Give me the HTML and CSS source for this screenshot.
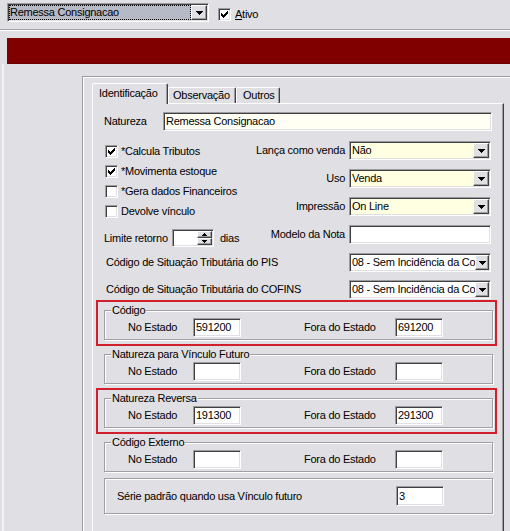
FILE: index.html
```html
<!DOCTYPE html>
<html lang="pt-BR">
<head>
<meta charset="utf-8">
<title>Natureza de Operação</title>
<link rel="stylesheet" href="styles.css">
</head>
<body>
<header class="topbar">
  <div class="combo">
    <div class="combo-field"><span class="combo-sel">Remessa Consignacao</span></div>
    <span class="dd-btn"><svg class="px" width="7" height="4" viewBox="0 0 7 4"><path d="M0 0H7V1H6V2H5V3H4V4H3V3H2V2H1V1H0Z"/></svg></span>
  </div>
  <div class="ativo">
    <span class="chk"><svg class="px" width="7" height="7" viewBox="0 0 7 7"><path d="M6 0H7V3H6V4H5V5H4V6H3V7H2V6H1V5H0V2H1V3H2V4H3V3H4V2H5V1H6Z"/></svg></span>
    <span><u>A</u>tivo</span>
  </div>
</header>
<main class="workspace">
  <div class="redbar"></div>
  <div class="lower">
    <div class="side"></div>
    <section class="panel">
      <div class="tabs">
        <div class="tab active t1">Identificação</div>
        <div class="tab t2">Observação</div>
        <div class="tab t3">Outros</div>
      </div>
      <div class="page">
        <div class="row">
          <span class="nat-lbl">Natureza</span>
          <span class="tb tb-nat">Remessa Consignacao</span>
        </div>

        <div class="section-b">
          <div class="leftcol">
            <div class="chkrow"><span class="chk"><svg class="px" width="7" height="7" viewBox="0 0 7 7"><path d="M6 0H7V3H6V4H5V5H4V6H3V7H2V6H1V5H0V2H1V3H2V4H3V3H4V2H5V1H6Z"/></svg></span><span>*Calcula Tributos</span></div>
            <div class="chkrow"><span class="chk"><svg class="px" width="7" height="7" viewBox="0 0 7 7"><path d="M6 0H7V3H6V4H5V5H4V6H3V7H2V6H1V5H0V2H1V3H2V4H3V3H4V2H5V1H6Z"/></svg></span><span>*Movimenta estoque</span></div>
            <div class="chkrow"><span class="chk"></span><span>*Gera dados Financeiros</span></div>
            <div class="chkrow"><span class="chk"></span><span>Devolve vínculo</span></div>
            <div class="limite">
              <span class="lim-lbl">Limite retorno</span>
              <span class="spin">
                <span class="spin-field"></span>
                <span class="spin-btns">
                  <span class="spin-btn"><svg class="px" width="5" height="3" viewBox="0 0 5 3"><path d="M2 0H3V1H4V2H5V3H0V2H1V1H2Z"/></svg></span>
                  <span class="spin-btn"><svg class="px" width="5" height="3" viewBox="0 0 5 3"><path d="M0 0H5V1H4V2H3V3H2V2H1V1H0Z"/></svg></span>
                </span>
              </span>
              <span class="dias">dias</span>
            </div>
          </div>
          <div class="rightcol">
            <div class="rrow">
              <span>Lança como venda</span>
              <div class="select yellow"><span class="sel-text">Não</span><span class="dd-btn"><svg class="px" width="7" height="4" viewBox="0 0 7 4"><path d="M0 0H7V1H6V2H5V3H4V4H3V3H2V2H1V1H0Z"/></svg></span></div>
            </div>
            <div class="rrow">
              <span>Uso</span>
              <div class="select yellow"><span class="sel-text">Venda</span><span class="dd-btn"><svg class="px" width="7" height="4" viewBox="0 0 7 4"><path d="M0 0H7V1H6V2H5V3H4V4H3V3H2V2H1V1H0Z"/></svg></span></div>
            </div>
            <div class="rrow">
              <span>Impressão</span>
              <div class="select yellow"><span class="sel-text">On Line</span><span class="dd-btn"><svg class="px" width="7" height="4" viewBox="0 0 7 4"><path d="M0 0H7V1H6V2H5V3H4V4H3V3H2V2H1V1H0Z"/></svg></span></div>
            </div>
            <div class="rrow">
              <span>Modelo da Nota</span>
              <span class="tb tb-wide"></span>
            </div>
          </div>
        </div>

        <div class="row cst-row">
          <span class="cst-lbl">Código de Situação Tributária do PIS</span>
          <div class="select cst"><span class="sel-text">08 - Sem Incidência da Contribuição</span><span class="dd-btn"><svg class="px" width="7" height="4" viewBox="0 0 7 4"><path d="M0 0H7V1H6V2H5V3H4V4H3V3H2V2H1V1H0Z"/></svg></span></div>
        </div>
        <div class="row cst-row">
          <span class="cst-lbl">Código de Situação Tributária do COFINS</span>
          <div class="select cst"><span class="sel-text">08 - Sem Incidência da Contribuição</span><span class="dd-btn"><svg class="px" width="7" height="4" viewBox="0 0 7 4"><path d="M0 0H7V1H6V2H5V3H4V4H3V3H2V2H1V1H0Z"/></svg></span></div>
        </div>

        <div class="groups">
          <div class="slot hl">
            <fieldset class="grp">
              <legend>Código</legend>
              <div class="grp-row">
                <span class="lbl-in">No Estado</span><span class="tb tb-num">591200</span>
                <span class="lbl-out">Fora do Estado</span><span class="tb tb-num">691200</span>
              </div>
            </fieldset>
          </div>
          <div class="slot">
            <fieldset class="grp">
              <legend>Natureza para Vínculo Futuro</legend>
              <div class="grp-row">
                <span class="lbl-in">No Estado</span><span class="tb tb-num"></span>
                <span class="lbl-out">Fora do Estado</span><span class="tb tb-num"></span>
              </div>
            </fieldset>
          </div>
          <div class="slot hl">
            <fieldset class="grp">
              <legend>Natureza Reversa</legend>
              <div class="grp-row">
                <span class="lbl-in">No Estado</span><span class="tb tb-num">191300</span>
                <span class="lbl-out">Fora do Estado</span><span class="tb tb-num">291300</span>
              </div>
            </fieldset>
          </div>
          <div class="slot">
            <fieldset class="grp">
              <legend>Código Externo</legend>
              <div class="grp-row">
                <span class="lbl-in">No Estado</span><span class="tb tb-num"></span>
                <span class="lbl-out">Fora do Estado</span><span class="tb tb-num"></span>
              </div>
            </fieldset>
          </div>
          <div class="series">
            <span class="ser-lbl">Série padrão quando usa Vínculo futuro</span>
            <span class="tb tb-ser">3</span>
          </div>
        </div>
      </div>
    </section>
  </div>
</main>
</body>
</html>
```

FILE: styles.css
```css
* { box-sizing: border-box; }

html, body {
  margin: 0;
  height: 531px;
  overflow: hidden;
}

body {
  background: #e0dfe3;
  font-family: "Liberation Sans", Arial, sans-serif;
  font-size: 11px;
  line-height: 13px;
  letter-spacing: -0.25px;
  color: #000;
}

.px { display: block; shape-rendering: crispEdges; fill: #000; }

/* ---------- sunken / raised helpers ---------- */
.combo, .tb, .select, .spin, .chk {
  border: 1px solid;
  border-color: #9d9da1 #fff #fff #9d9da1;
  box-shadow: inset 1px 1px 0 #404040, inset -1px -1px 0 #e0dfe3;
  background: #fff;
}

.dd-btn, .spin-btn {
  display: flex;
  align-items: center;
  justify-content: center;
  background: #e0dfe3;
  border: 1px solid;
  border-color: #fff #404040 #404040 #fff;
  box-shadow: inset -1px -1px 0 #9d9da1;
  flex: none;
}

.dd-btn { width: 16px; }

/* ---------- top bar ---------- */
.topbar {
  height: 30px;
  display: flex;
  align-items: flex-start;
  padding: 3px 0 0 7px;
  border-bottom: 1px solid #a2a2a6;
  box-shadow: 0 1px 0 #fff;
}

.combo {
  width: 202px;
  height: 19px;
  display: flex;
  padding: 1px;
}

.combo-field { flex: 1; display: flex; }

.combo-sel {
  flex: 1;
  background: #b6b9c6;
  border: 1px dotted #000;
  white-space: nowrap;
  overflow: hidden;
}

.ativo {
  display: flex;
  align-items: center;
  gap: 4px;
  margin: 5px 0 0 9px;
}

.chk {
  width: 13px;
  height: 13px;
  display: flex;
  align-items: center;
  justify-content: center;
  flex: none;
}

/* ---------- workspace ---------- */
.workspace { padding-top: 8px; }

.redbar {
  margin-left: 7px;
  height: 26px;
  background: #800000;
  border-bottom: 1px solid #6a0000;
}

.lower {
  display: flex;
  height: 480px;
}

.side {
  width: 82px;
  flex: none;
  background: linear-gradient(90deg, transparent 2px, #f2f2f4 2px, #f2f2f4 4px, transparent 4px);
}

.panel {
  flex: 1;
  margin-top: 12px;
  border-top: 1px solid #9d9da1;
  border-left: 1px solid #9d9da1;
  box-shadow: inset 1px 1px 0 #fff;
  padding: 6px 0 0 9px;
}

/* ---------- tabs ---------- */
.tabs {
  display: flex;
  align-items: flex-end;
  height: 20px;
}

.tab {
  height: 16px;
  padding: 1px 0 0 4px;
  border: 1px solid;
  border-bottom: none;
  border-color: #fff #404040 transparent #fff;
  box-shadow: inset -1px 0 0 #9d9da1;
  border-radius: 2px 2px 0 0;
  white-space: nowrap;
}

.tab.active {
  height: 21px;
  margin-bottom: -1px;
  position: relative;
  z-index: 1;
  background: #e0dfe3;
  padding: 3px 0 0 6px;
}

.t1 { width: 76px; }
.t2 { width: 68px; }
.t3 { width: 44px; padding-left: 6px; }

.page {
  width: 412px;
  min-height: 440px;
  border-top: 1px solid #fff;
  border-left: 1px solid #fff;
  border-right: 1px solid #404040;
  box-shadow: inset -1px 0 0 #9d9da1;
  padding: 8px 8px 0 5px;
}

/* ---------- rows ---------- */
.row {
  display: flex;
  align-items: center;
  height: 19px;
}

.nat-lbl { width: 59px; margin-left: 6px; }

.tb {
  height: 19px;
  padding: 0 2px;
  display: flex;
  align-items: center;
  white-space: nowrap;
  overflow: hidden;
}

.tb-nat { width: 329px; background: #fffff4; }

.section-b {
  display: flex;
  margin-top: 10px;
}

.leftcol {
  width: 150px;
  flex: none;
  display: flex;
  flex-direction: column;
}

.chkrow {
  height: 20px;
  display: flex;
  align-items: center;
  gap: 3px;
  padding-left: 7px;
}

.limite {
  display: flex;
  align-items: center;
  height: 18px;
  margin-top: 8px;
  padding-left: 6px;
}

.lim-lbl { width: 68px; }

.spin {
  width: 42px;
  height: 18px;
  display: flex;
  padding: 1px;
}

.spin-field { flex: 1; }

.spin-btns {
  width: 15px;
  display: flex;
  flex-direction: column;
}

.spin-btn { flex: 1; }

.dias { margin-left: 6px; }

.rightcol {
  flex: 1;
  display: flex;
  flex-direction: column;
  gap: 9px;
  padding-right: 4px;
}

.rrow {
  display: flex;
  justify-content: flex-end;
  align-items: center;
  gap: 4px;
  height: 19px;
}

.select {
  width: 142px;
  height: 19px;
  display: flex;
  padding: 1px;
  flex: none;
}

.select.yellow { background: #ffffe1; }

.sel-text {
  flex: 1;
  padding-left: 1px;
  display: flex;
  align-items: center;
  white-space: nowrap;
  overflow: hidden;
}

.tb-wide { width: 142px; }

.cst-row { margin-top: 6px; }
.cst-row + .cst-row { margin-top: 8px; }
.cst-lbl { flex: 1; padding-left: 8px; }
.select.cst { margin-right: 4px; }
.select.cst .dd-btn { width: 14px; }

/* ---------- groups ---------- */
.groups { margin-top: 3px; }

.slot {
  height: 42px;
  margin-bottom: 2px;
  padding: 2px 2px 4px 6px;
}

.slot.hl { outline: 2px solid #d21f2c; }

.grp {
  margin: 0;
  padding: 2px 0;
  min-inline-size: 0;
  border: 1px solid #a0a0a4;
  box-shadow: inset 1px 1px 0 #fff, 1px 1px 0 #fff;
}

.grp legend {
  margin-left: 6px;
  padding: 0 1px;
  line-height: 12px;
  background: #e0dfe3;
}

.grp-row {
  display: flex;
  align-items: center;
  height: 19px;
  padding-left: 23px;
}

.lbl-in { width: 65px; }
.lbl-out { width: 91px; margin-left: 63px; }
.tb-num { width: 48px; }

.series {
  margin: 1px 2px 0 6px;
  height: 36px;
  border: 1px solid #a0a0a4;
  box-shadow: inset 1px 1px 0 #fff, 1px 1px 0 #fff;
  display: flex;
  align-items: center;
  padding-left: 12px;
}

.ser-lbl { width: 279px; }
.tb-ser { width: 48px; height: 20px; }
```
